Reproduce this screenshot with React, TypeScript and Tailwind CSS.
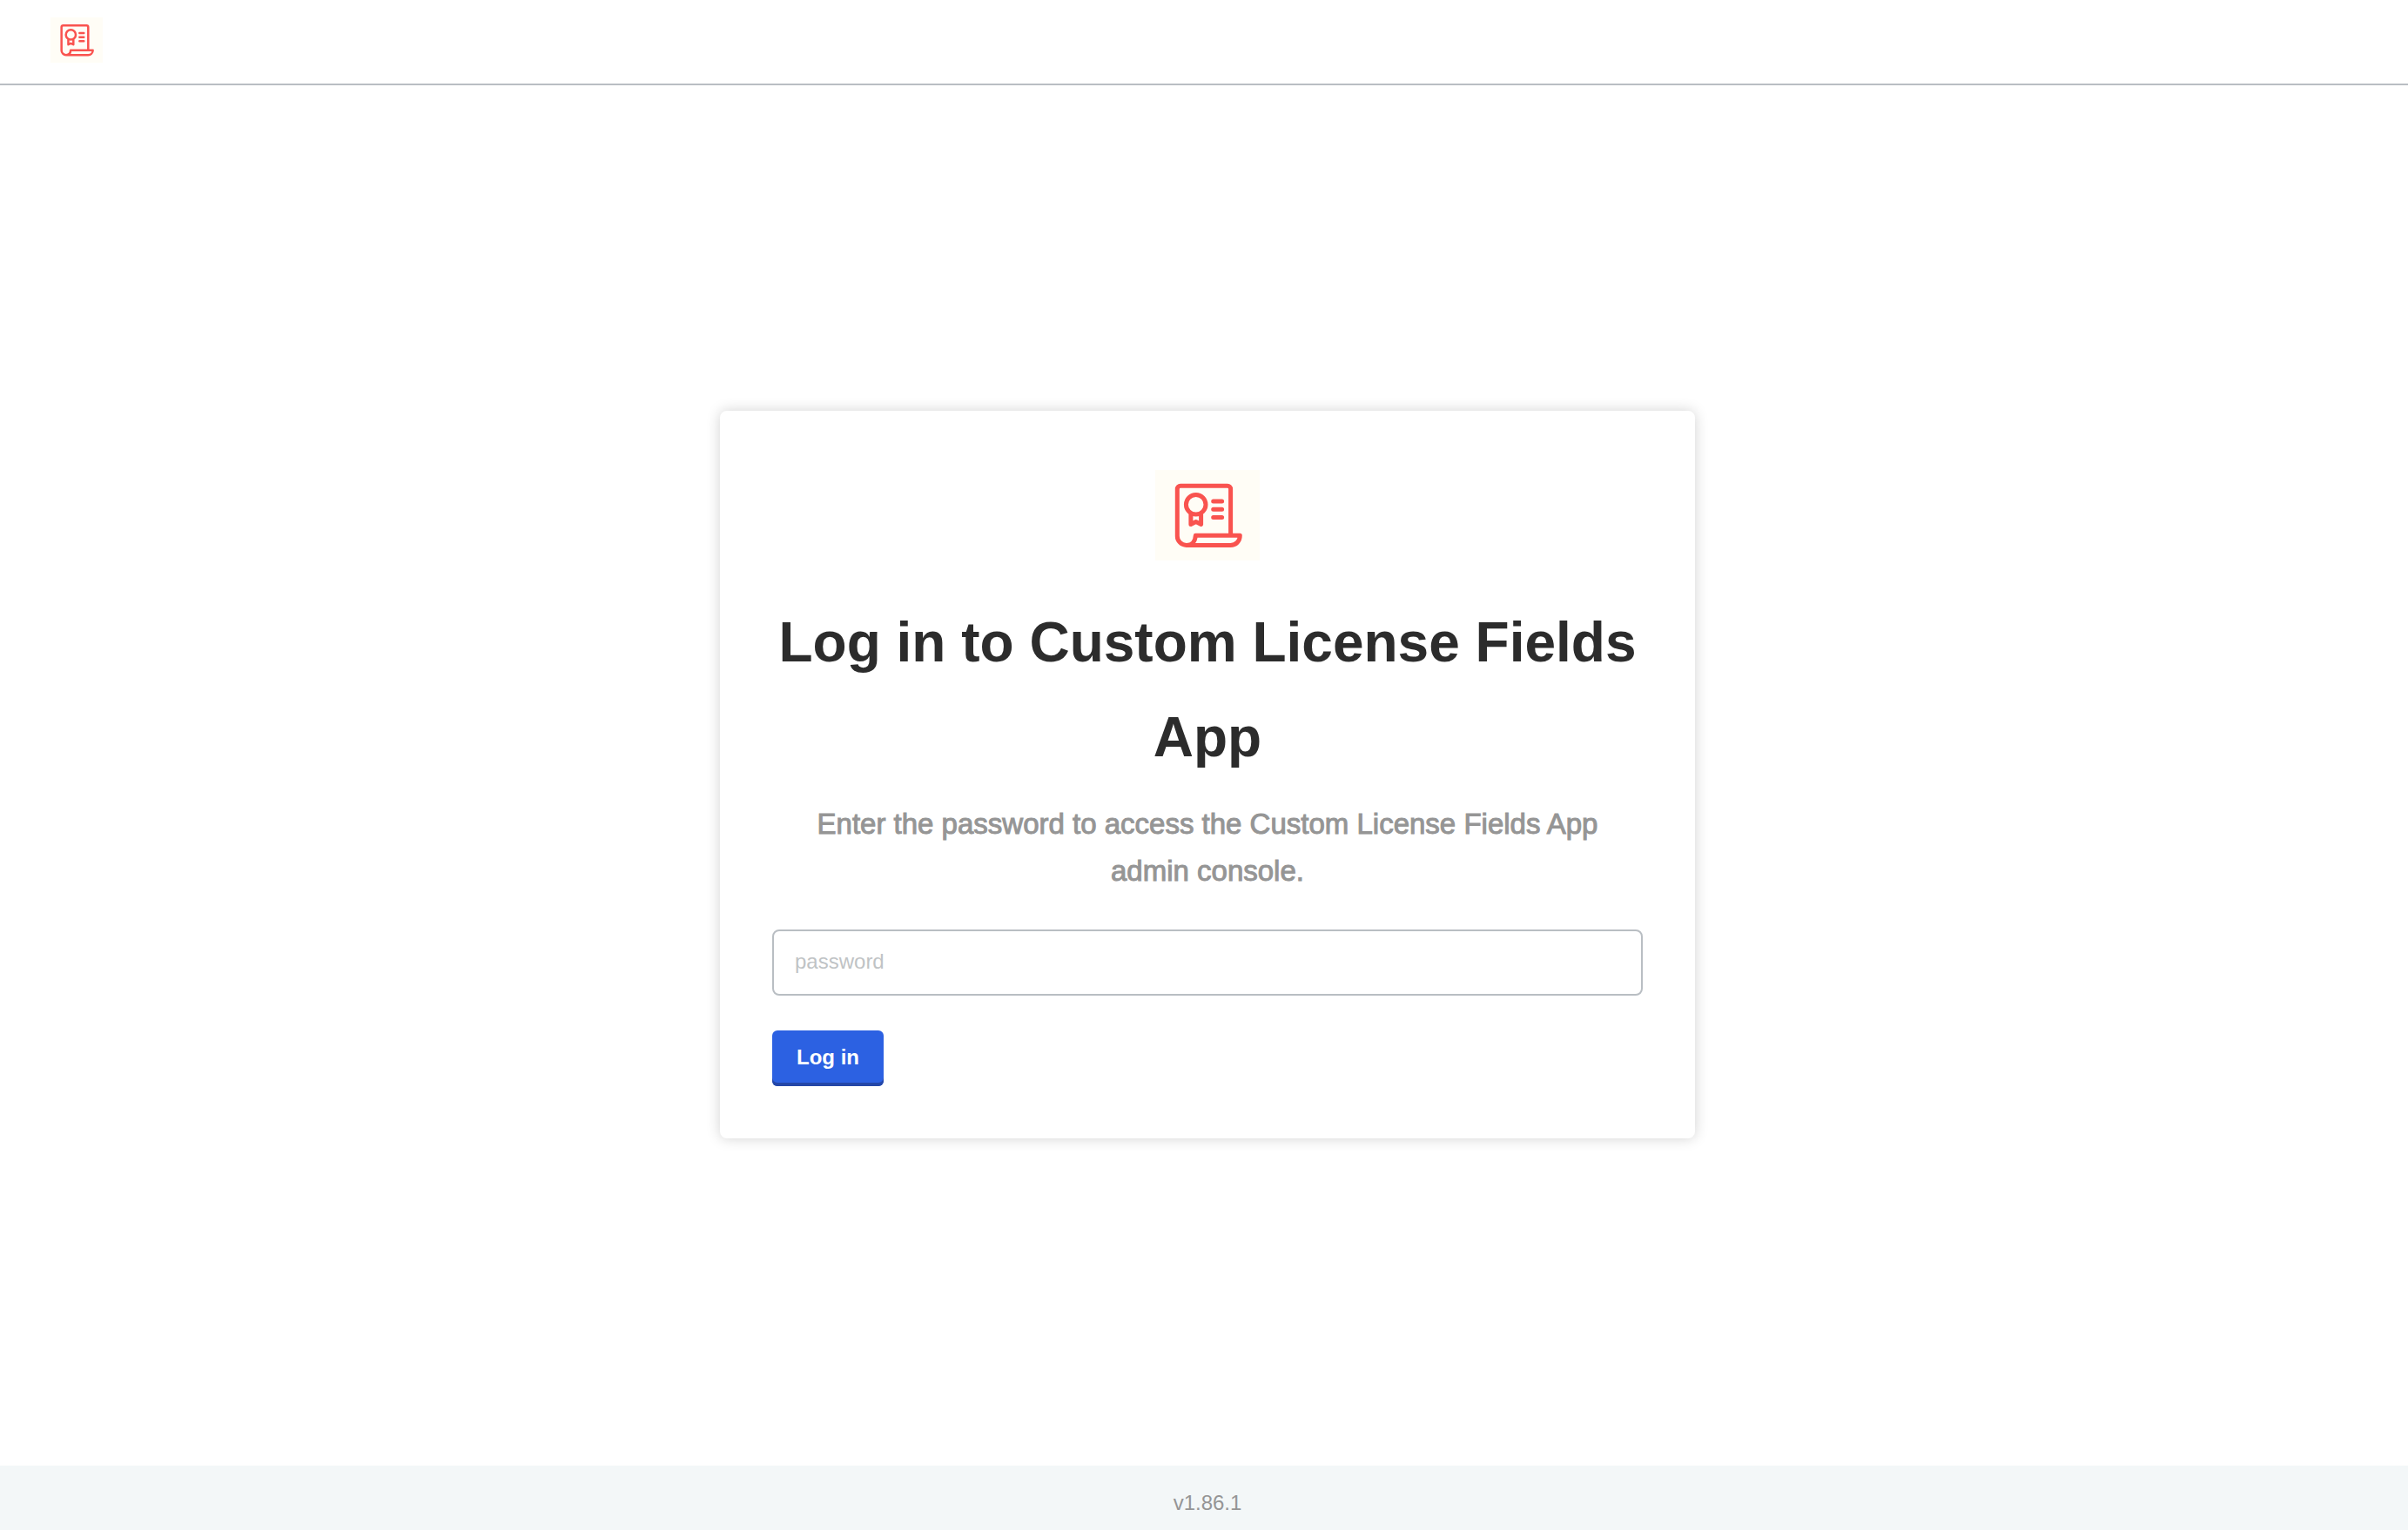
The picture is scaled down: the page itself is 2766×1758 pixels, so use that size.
function CertificateLogo({ className }: { className: string }) {
  return (
    <svg
      viewBox="0 0 120 104"
      className={className}
      fill="none"
      stroke="#f9534f"
      strokeWidth="5"
      strokeLinecap="round"
      strokeLinejoin="round"
      role="img"
      aria-label="Custom License Fields App"
    >
      <rect width="120" height="104" fill="#fffdf6" stroke="none" />
      <path d="M86.6 75V22a3.7 3.7 0 0 0-3.7-3.7H29a3.7 3.7 0 0 0-3.7 3.7v54a10.4 10.4 0 0 0 10.4 10.4H86.5C92.5 86.4 97.3 82 97.3 75.3H46.3C46 82 42 86.4 36 86.4" />
      <circle cx="46.7" cy="39.8" r="11.3" />
      <path d="M40.9 51.6v10.8l5.8-2.8 5.9 2.8V51.6" />
      <path d="M66.7 36h9.9M66.7 45.3h9.9M66.7 54.4h9.9" />
    </svg>
  );
}

export default function App() {
  return (
    <div className="flex min-h-screen flex-col bg-white font-['Liberation_Sans',Arial,sans-serif] text-2xl">
      <header className="flex border-b-2 border-[#b9bec3] px-[58px] pt-5 pb-6">
        <a href="#" aria-label="Home">
          <CertificateLogo className="block w-[60px]" />
        </a>
      </header>

      <main className="flex flex-1 items-center justify-center pb-0.5 pl-2">
        <form
          className="flex w-full max-w-[1120px] flex-col rounded-lg bg-white px-[60px] pt-[68px] pb-[60px] shadow-[0_0_16px_rgba(0,0,0,0.18)]"
          onSubmit={(e) => e.preventDefault()}
        >
          <CertificateLogo className="w-[120px] self-center" />
          <h1 className="mt-10 text-center text-[64px] leading-[109px] font-bold text-[#2c2c2c]">
            Log in to Custom License Fields App
          </h1>
          <p className="mt-[18px] px-10 text-center text-[33px] leading-[54px] font-medium text-[#959595] [-webkit-text-stroke:1px_#959595]">
            Enter the password to access the Custom License Fields App admin console.
          </p>
          <input
            type="password"
            aria-label="password"
            placeholder="password"
            className="mt-10 h-[76px] w-full rounded-lg border-2 border-[#b9bec3] bg-white px-6 pb-0.5 text-2xl text-[#2c2c2c] placeholder:text-[#bfc3c5]"
          />
          <button
            type="submit"
            className="mt-10 h-16 self-start rounded-md bg-[#2c61e2] px-7 pb-0.5 font-bold text-white shadow-[inset_0_-4px_#2447a8]"
          >
            Log in
          </button>
        </form>
      </main>

      <footer className="bg-[#f3f7f8] pt-[25px] pb-[13px] pl-2 text-center leading-9 text-[#959595]">v1.86.1</footer>
    </div>
  );
}
